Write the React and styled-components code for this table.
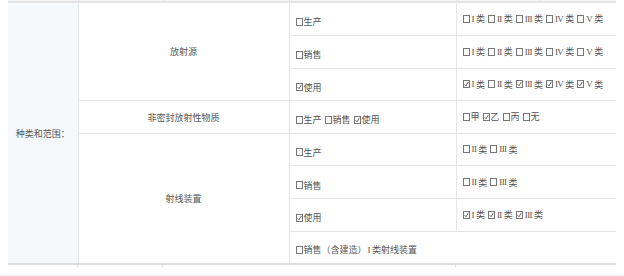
import styled, { createGlobalStyle } from 'styled-components';

const Global = createGlobalStyle`
  html, body { margin: 0; padding: 0; background: #fff; }
  body { font-family: "Noto Sans CJK SC", "Noto Sans", sans-serif; }
`;

const Page = styled.div`
  width: 624px;
  height: 276px;
  overflow: hidden;
  display: flex;
  flex-direction: column;
`;

const Frame = styled.div`
  padding: 0 8px;
`;

const Table = styled.table`
  width: 608px;
  border-collapse: collapse;
  table-layout: fixed;
  font-size: 9px;
  color: #555;
`;

const StubCell = styled.td`
  height: ${(p) => p.$h}px;
  padding: 0;
  border-left: 1px solid #e2e2e2;
  border-right: 1px solid #e2e2e2;
  &:first-child { border-left: none; }
  &:last-child { border-right: none; }
`;

const TopStub = styled.tr`
  td { border-bottom: 2px solid #e4e4e4; background: #f4f4f4; }
`;

const Row = styled.tr`
  height: 32.6px;
`;

const Label = styled.td`
  background: #f5f9fc;
  text-align: center;
  vertical-align: middle;
  padding: 2px 0 0;
  border-right: 1px solid #e2e6ea;
  border-bottom: 2px solid #dedede;
`;

const Group = styled.td`
  text-align: center;
  vertical-align: middle;
  padding: 0;
  border-right: 1px solid #e6e6e6;
  border-bottom: 1px solid #e6e6e6;
  ${(p) => p.$last && 'border-bottom: 2px solid #dedede;'}
`;

const Cell = styled.td`
  padding: ${(p) => (p.$low ? '6px 6px 0' : '0 6px')};
  vertical-align: middle;
  white-space: nowrap;
  border-bottom: 1px solid #e6e6e6;
  border-right: 1px solid #e6e6e6;
  ${(p) => p.$last && 'border-bottom: 2px solid #dedede;'}
  &:last-child { border-right: none; }
`;

const Opts = styled.span`
  display: inline-flex;
  align-items: center;
  gap: 3px;
`;

const OptItem = styled.span`
  display: inline-flex;
  align-items: center;
`;

const Box = styled.span`
  display: inline-block;
  width: 7px;
  height: 8px;
  box-sizing: border-box;
  border: 1px solid #777;
  margin-right: 1px;
  svg { display: block; width: 100%; height: 100%; }
`;

const Roman = styled.span`
  font-family: "Liberation Serif", "DejaVu Serif", serif;
  font-size: 9px;
  letter-spacing: -0.6px;
  margin: 0 2px 0 1px;
`;

const Bottom = styled.div`
  height: 9px;
  padding: 0 8px;
  display: flex;
`;

const Tick = styled.span`
  width: ${(p) => p.$w}px;
  height: 2px;
  border-right: ${(p) => (p.$line ? '1px solid #e2e2e2' : 'none')};
  box-sizing: border-box;
`;

const Band = styled.div`
  flex: 1;
  background: #f3f7fd;
`;

function Check({ on }) {
  return (
    <Box>
      {on && (
        <svg viewBox="0 0 5 6">
          <path d="M0.6 3.2 L2 4.8 L4.4 0.8" fill="none" stroke="#555" strokeWidth="0.9" />
        </svg>
      )}
    </Box>
  );
}

function Opt({ on, roman, children }) {
  return (
    <OptItem>
      <Check on={on} />
      {roman && <Roman>{roman}</Roman>}
      {children}
    </OptItem>
  );
}

const romans = ['I', 'II', 'III', 'IV', 'V'];

function Classes({ list, checked = [] }) {
  return (
    <Opts>
      {list.map((r) => (
        <Opt key={r} roman={r} on={checked.includes(r)}>类</Opt>
      ))}
    </Opts>
  );
}

const stubWidths = [70, 85, 126, 167, 84, 76];

export default function App() {
  return (
    <Page>
      <Global />
      <Frame>
        <Table>
          <colgroup>
            {stubWidths.map((w, i) => <col key={i} style={{ width: w }} />)}
          </colgroup>
          <tbody>
            <TopStub>
              {stubWidths.map((w, i) => <StubCell key={i} $h={1} />)}
            </TopStub>
          </tbody>
        </Table>
        <Table>
          <colgroup>
            <col style={{ width: 70 }} />
            <col style={{ width: 211 }} />
            <col style={{ width: 167 }} />
            <col style={{ width: 160 }} />
          </colgroup>
          <tbody>
            <Row>
              <Label rowSpan={8}>种类和范围：</Label>
              <Group rowSpan={3}>放射源</Group>
              <Cell $low><Opt>生产</Opt></Cell>
              <Cell><Classes list={romans} /></Cell>
            </Row>
            <Row>
              <Cell $low><Opt>销售</Opt></Cell>
              <Cell><Classes list={romans} /></Cell>
            </Row>
            <Row>
              <Cell $low><Opt on>使用</Opt></Cell>
              <Cell><Classes list={romans} checked={['I', 'III', 'IV', 'V']} /></Cell>
            </Row>
            <Row>
              <Group>非密封放射性物质</Group>
              <Cell $low>
                <Opts>
                  <Opt>生产</Opt>
                  <Opt>销售</Opt>
                  <Opt on>使用</Opt>
                </Opts>
              </Cell>
              <Cell>
                <Opts>
                  <Opt>甲</Opt>
                  <Opt on>乙</Opt>
                  <Opt>丙</Opt>
                  <Opt>无</Opt>
                </Opts>
              </Cell>
            </Row>
            <Row>
              <Group rowSpan={4} $last>射线装置</Group>
              <Cell $low><Opt>生产</Opt></Cell>
              <Cell><Classes list={['II', 'III']} /></Cell>
            </Row>
            <Row>
              <Cell $low><Opt>销售</Opt></Cell>
              <Cell><Classes list={['II', 'III']} /></Cell>
            </Row>
            <Row>
              <Cell $low><Opt on>使用</Opt></Cell>
              <Cell><Classes list={['I', 'II', 'III']} checked={['I', 'II', 'III']} /></Cell>
            </Row>
            <Row>
              <Cell $low $last colSpan={2}>
                <Opt>销售（含建造）<Roman>I</Roman>类射线装置</Opt>
              </Cell>
            </Row>
          </tbody>
        </Table>
      </Frame>
      <Bottom>
        <Tick $w={70} $line />
        <Tick $w={85} $line />
        <Tick $w={293} $line />
      </Bottom>
      <Band />
    </Page>
  );
}
